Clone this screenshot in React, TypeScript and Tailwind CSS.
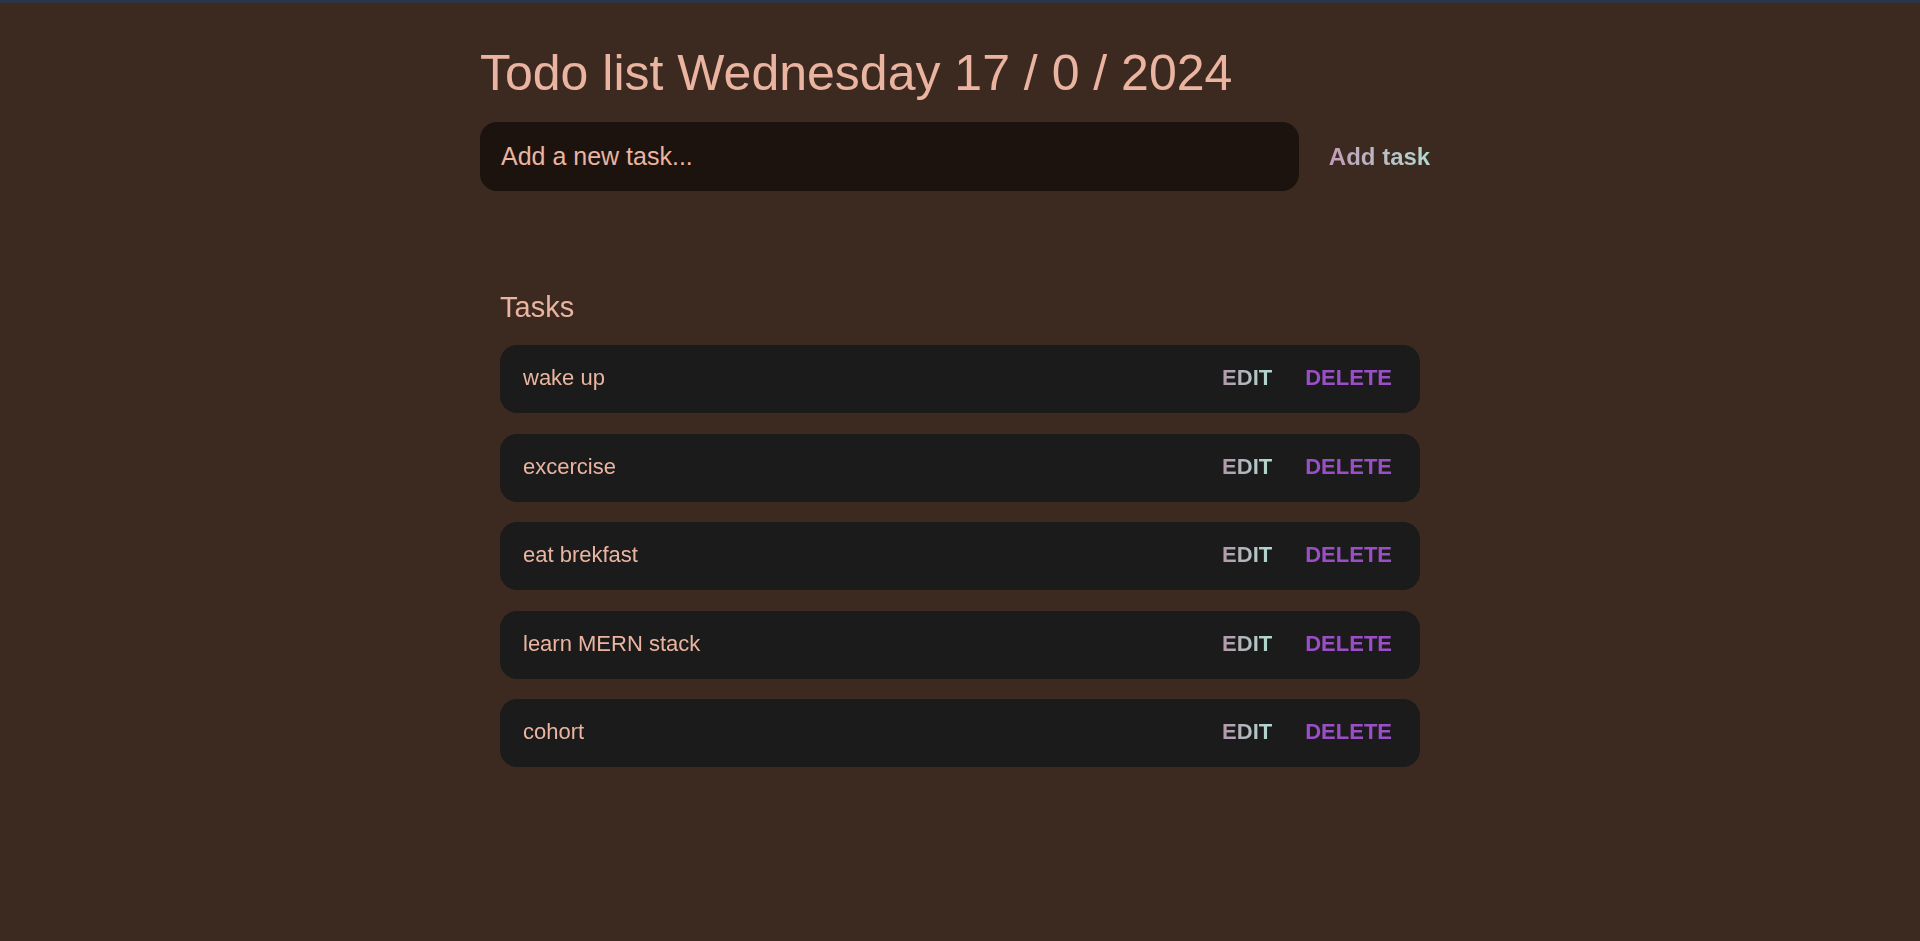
import { useState } from "react";

const initialTasks = [
  "wake up",
  "excercise",
  "eat brekfast",
  "learn MERN stack",
  "cohort",
];

export default function App() {
  const [tasks, setTasks] = useState(initialTasks);
  const [text, setText] = useState("");

  const addTask = () => {
    if (!text.trim()) return;
    setTasks([...tasks, text.trim()]);
    setText("");
  };

  return (
    <div className="min-h-[941px] bg-[#3c2a21] font-['Liberation_Sans',Arial,sans-serif] text-[#eab4a0]">
      <div className="h-[3px] bg-[#2e3447]" />
      <div className="mx-auto w-[960px]">
        <h1 className="mt-[45px] text-[50px] leading-none font-normal">
          Todo list Wednesday 17 / 0 / 2024
        </h1>

        <div className="mt-[24px] flex items-center gap-[20px]">
          <input
            autoFocus
            value={text}
            onChange={(e) => setText(e.target.value)}
            placeholder="Add a new task..."
            className="h-[69px] flex-1 rounded-[17px] bg-[#1c130e] pl-[21px] text-[25px] text-[#eab4a0] caret-[#e6cf9a] outline-none placeholder:text-[#eab4a0]"
          />
          <button
            onClick={addTask}
            className="w-[121px] bg-gradient-to-r from-[#c096b4] to-[#addfd2] bg-clip-text text-[24px] font-bold text-transparent"
          >
            Add task
          </button>
        </div>

        <div className="mt-[82px] p-[20px]">
          <h2 className="text-[29px] leading-none font-normal">Tasks</h2>
          <div className="mt-[23px] flex flex-col gap-[20.5px]">
            {tasks.map((t, i) => (
              <div
                key={i}
                className="flex h-[68px] items-center justify-between rounded-[17px] bg-[#1b1b1b] pr-[28px] pb-[3px] pl-[23px]"
              >
                <span className="text-[22px]">{t}</span>
                <div className="flex items-center gap-[33px] text-[22px] font-bold">
                  <button className="bg-gradient-to-r from-[#b198ab] to-[#b0dcd1] bg-clip-text text-transparent">
                    EDIT
                  </button>
                  <button
                    onClick={() => setTasks(tasks.filter((_, j) => j !== i))}
                    className="text-[#9b4fc7]"
                  >
                    DELETE
                  </button>
                </div>
              </div>
            ))}
          </div>
        </div>
      </div>
    </div>
  );
}
